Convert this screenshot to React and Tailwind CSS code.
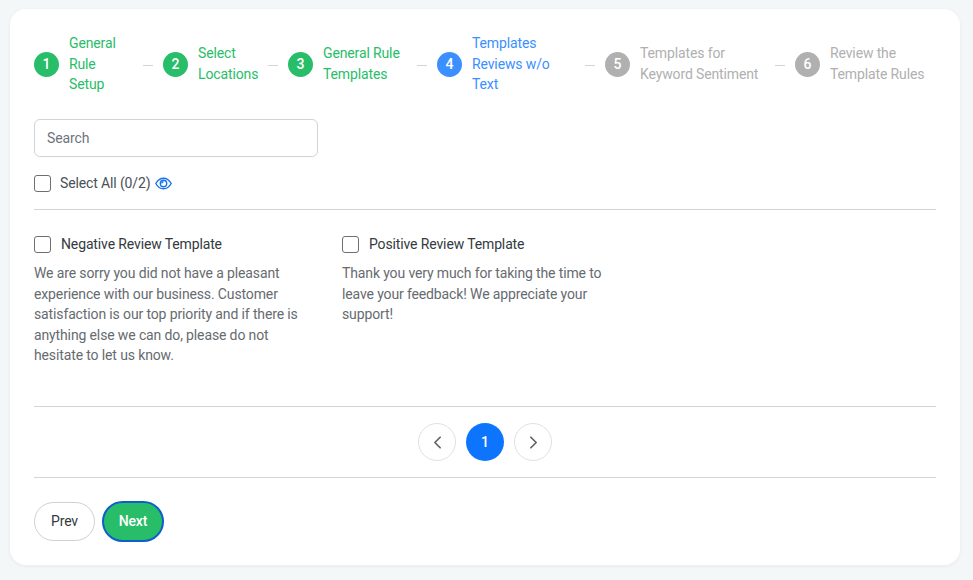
import React from 'react';
import { ChevronLeft, ChevronRight } from 'lucide-react';

const steps = [
    { n: 1, lines: ['General', 'Rule', 'Setup'], w: 'w-[64px]', state: 'done' },
    { n: 2, lines: ['Select', 'Locations'], w: 'w-[60px]', state: 'done' },
    { n: 3, lines: ['General Rule', 'Templates'], w: 'w-[84px]', state: 'done' },
    { n: 4, lines: ['Templates', 'Reviews w/o', 'Text'], w: 'w-[103px]', state: 'active' },
    { n: 5, lines: ['Templates for', 'Keyword Sentiment'], w: 'w-[125px]', state: 'todo' },
    { n: 6, lines: ['Review the', 'Template Rules'], w: 'w-[100px]', state: 'todo' },
];

const circleColor = {
    done: 'bg-[#28bd68]',
    active: 'bg-[#3b8fff]',
    todo: 'bg-[#b0b0b0]',
};

const textColor = {
    done: 'text-[#28bd68]',
    active: 'text-[#3b8fff]',
    todo: 'text-[#b0b0b0]',
};

const templates = [
    {
        title: 'Negative Review Template',
        body: 'We are sorry you did not have a pleasant experience with our business. Customer satisfaction is our top priority and if there is anything else we can do, please do not hesitate to let us know.',
    },
    {
        title: 'Positive Review Template',
        body: 'Thank you very much for taking the time to leave your feedback! We appreciate your support!',
    },
];

const Checkbox = () => (
    <span className="block w-[17px] h-[17px] shrink-0 rounded-[3px] border border-[#6f6f6f] bg-white" />
);

const EyeIcon = () => (
    <svg width="17" height="13" viewBox="0 0 17 13" fill="none" stroke="#1a73e8" strokeWidth="1.4">
        <path d="M0.8 6.5C2.6 3.2 5.3 1.2 8.5 1.2s5.9 2 7.7 5.3c-1.8 3.3-4.5 5.3-7.7 5.3S2.6 9.8 0.8 6.5z" />
        <circle cx="8.5" cy="6.5" r="3.2" />
        <path d="M8.5 4.8a1.7 1.7 0 0 0-1.7 1.7" />
    </svg>
);

const App = () => {
    return (
        <div className="h-[580px] bg-[#f4f7f8] pt-[9px] px-[10px] pb-[15px] font-['Roboto',sans-serif] tracking-[-0.13px] overflow-hidden">
            <div className="w-[950px] h-[556px] bg-white rounded-[16px] shadow-[0_1px_4px_rgba(30,40,50,0.06)] px-[24px] flex flex-col">

                {/* Stepper */}
                <div className="flex items-center h-[88px] mt-[11px] shrink-0">
                    {steps.map((step, i) => (
                        <React.Fragment key={step.n}>
                            {i > 0 && <span className="block w-[10px] h-px bg-[#d4d4d4] mx-[10px] mt-[2px] shrink-0" />}
                            <span className={`flex items-center justify-center w-[25px] h-[25px] rounded-full shrink-0 text-white text-[14px] font-medium ${circleColor[step.state]}`}>
                                {step.n}
                            </span>
                            <div className={`ml-[10px] shrink-0 text-[14px] whitespace-nowrap ${step.lines.length === 2 ? 'leading-[21px] -mt-px' : 'leading-[20.5px]'} ${step.w} ${textColor[step.state]}`}>
                                {step.lines.map((line) => (
                                    <div key={line}>{line}</div>
                                ))}
                            </div>
                        </React.Fragment>
                    ))}
                </div>

                {/* Search */}
                <div className="mt-[11px] w-[284px] h-[38px] shrink-0 rounded-[6px] border border-[#ced4da] flex items-center px-[12px] text-[14px] text-[#6c757d]">
                    Search
                </div>

                <div className="flex items-center mt-[18px] h-[17px] shrink-0">
                    <Checkbox />
                    <span className="ml-[9px] text-[14px] text-[#495057]">Select All (0/2)</span>
                    <span className="ml-[5px] flex"><EyeIcon /></span>
                </div>

                <div className="h-px bg-[#d4d4d4] mt-[17px] shrink-0" />

                {/* Templates */}
                <div className="flex gap-[16px] mt-[26px] h-[170px] shrink-0">
                    {templates.map((t) => (
                        <div key={t.title} className="w-[292px]">
                            <div className="flex items-center h-[17px]">
                                <Checkbox />
                                <span className="ml-[10px] text-[14px] text-[#343a40]">{t.title}</span>
                            </div>
                            <p className="mt-[10px] text-[14px] leading-[20.5px] text-[#666b70] w-[270px]">{t.body}</p>
                        </div>
                    ))}
                </div>

                <div className="h-px bg-[#d4d4d4] shrink-0" />

                {/* Pagination */}
                <div className="flex justify-center gap-[10px] mt-[16px] shrink-0">
                    <button className="flex items-center justify-center w-[38px] h-[38px] rounded-full border border-[#dee2e6] text-[#5f6368]">
                        <ChevronLeft size={21} strokeWidth={2} />
                    </button>
                    <button className="flex items-center justify-center w-[38px] h-[38px] rounded-full bg-[#0d75fd] text-white text-[14px] font-medium">
                        1
                    </button>
                    <button className="flex items-center justify-center w-[38px] h-[38px] rounded-full border border-[#dee2e6] text-[#5f6368]">
                        <ChevronRight size={21} strokeWidth={2} />
                    </button>
                </div>

                <div className="h-px bg-[#d4d4d4] mt-[16px] shrink-0" />

                {/* Footer buttons */}
                <div className="flex items-center gap-[7px] mt-[23px] shrink-0">
                    <button className="w-[61px] h-[39px] rounded-full border border-[#d0d0d0] bg-white text-[14px] text-[#343a40]">
                        Prev
                    </button>
                    <button className="w-[62px] h-[41px] rounded-full border-2 border-[#0f5fc9] bg-[#28bd68] text-[14px] font-medium text-white">
                        Next
                    </button>
                </div>
            </div>
        </div>
    );
};

export default App;
